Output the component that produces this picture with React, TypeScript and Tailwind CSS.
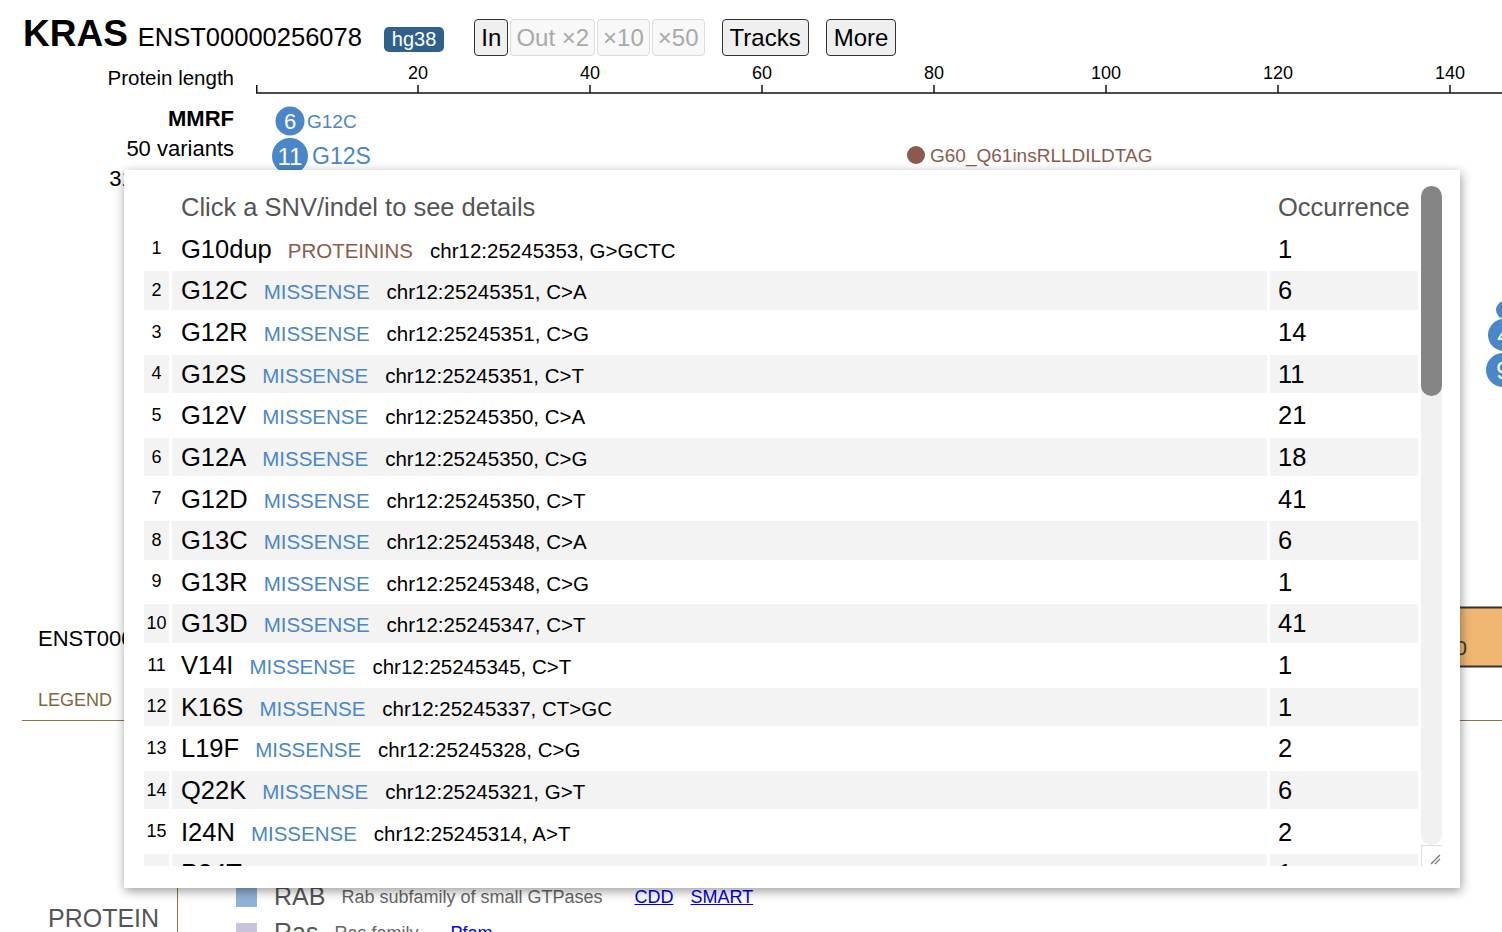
import React from 'react';

const rows: [string, string, string, string][] = [
  ['G10dup', 'PROTEININS', 'chr12:25245353, G>GCTC', '1'],
  ['G12C', 'MISSENSE', 'chr12:25245351, C>A', '6'],
  ['G12R', 'MISSENSE', 'chr12:25245351, C>G', '14'],
  ['G12S', 'MISSENSE', 'chr12:25245351, C>T', '11'],
  ['G12V', 'MISSENSE', 'chr12:25245350, C>A', '21'],
  ['G12A', 'MISSENSE', 'chr12:25245350, C>G', '18'],
  ['G12D', 'MISSENSE', 'chr12:25245350, C>T', '41'],
  ['G13C', 'MISSENSE', 'chr12:25245348, C>A', '6'],
  ['G13R', 'MISSENSE', 'chr12:25245348, C>G', '1'],
  ['G13D', 'MISSENSE', 'chr12:25245347, C>T', '41'],
  ['V14I', 'MISSENSE', 'chr12:25245345, C>T', '1'],
  ['K16S', 'MISSENSE', 'chr12:25245337, CT>GC', '1'],
  ['L19F', 'MISSENSE', 'chr12:25245328, C>G', '2'],
  ['Q22K', 'MISSENSE', 'chr12:25245321, G>T', '6'],
  ['I24N', 'MISSENSE', 'chr12:25245314, A>T', '2'],
  ['P34T', 'MISSENSE', 'chr12:25245305, C>T', '1'],
];

const ticks = [20, 40, 60, 80, 100, 120, 140];

function ZoomButton({ label, disabled, className = '' }: { label: string; disabled?: boolean; className?: string }) {
  return (
    <button
      disabled={disabled}
      className={
        'h-[37px] text-[24px] leading-none rounded-[4px] border ' +
        (disabled
          ? 'bg-[#f8f8f8] border-[#dcdcdc] text-[#a9a9a9]'
          : 'bg-[#efefef] border-[#333] text-black') +
        ' ' +
        className
      }
    >
      {label}
    </button>
  );
}

function VariantTable() {
  return (
    <div className="absolute left-[124px] top-[170px] w-[1336px] h-[718px] bg-white shadow-[1px_3px_10px_rgba(0,0,0,0.4)] pt-[15px] pl-[17px] pr-[18px] pb-[22px]">
      <div className="flex h-full">
        <div className="flex-1 overflow-hidden">
          <div className="grid grid-cols-[25px_1fr_148px] auto-rows-[38.64px] gap-[3px] p-[3px]">
            <div />
            <div className="flex items-center pl-[9px] text-[25.5px] text-[#555]">Click a SNV/indel to see details</div>
            <div className="flex items-center pl-[8px] text-[25.5px] text-[#555]">Occurrence</div>
            {rows.map(([name, cls, coord, count], i) => {
              const bg = i % 2 === 1 ? 'bg-[#f3f3f3]' : '';
              return (
                <React.Fragment key={i}>
                  <div className={'flex items-center justify-center text-[18px] text-black ' + bg}>{i + 1}</div>
                  <div className={'flex items-center pl-[9px] ' + bg}>
                    <div className="flex items-baseline">
                      <span className="text-[25.5px] text-black">{name}</span>
                      <span
                        className={
                          'ml-[16px] text-[20.5px] ' + (cls === 'MISSENSE' ? 'text-[#4a86c8]' : 'text-[#8b5a4a]')
                        }
                      >
                        {cls}
                      </span>
                      <span className="ml-[17px] text-[20.5px] text-black">{coord}</span>
                    </div>
                  </div>
                  <div className={'flex items-center pl-[8px] text-[25.5px] text-black ' + bg}>{count}</div>
                </React.Fragment>
              );
            })}
          </div>
        </div>
        <div className="w-[21px] flex flex-col pt-[1px]">
          <div className="flex-1 rounded-full bg-[#f1f1f1]">
            <div className="h-[210px] rounded-full bg-[#858585]" />
          </div>
          <div className="h-[21px] border-t border-l border-[#dddddd] flex items-end justify-end">
            <svg width="14" height="14" viewBox="0 0 14 14">
              <line x1="3" y1="12" x2="12" y2="3" stroke="#777" strokeWidth="1.2" />
              <line x1="7" y1="12" x2="12" y2="7" stroke="#777" strokeWidth="1.2" />
            </svg>
          </div>
        </div>
      </div>
    </div>
  );
}

export default function App() {
  return (
    <div className="relative w-[1502px] h-[932px] overflow-hidden bg-white font-['Liberation_Sans',Arial,sans-serif] text-black">
      {/* header */}
      <div className="flex items-start h-[56px] pl-[23px]">
        <div className="mt-[15px] text-[37px] font-bold leading-none">KRAS</div>
        <div className="mt-[25px] ml-[10px] text-[25.5px] leading-none">ENST00000256078</div>
        <div className="mt-[27px] ml-[22px] h-[25px] px-[8px] rounded-[5px] bg-[#30618c] text-white text-[20px] leading-[25px]">
          hg38
        </div>
        <div className="mt-[19px] ml-[30px] flex gap-[2px]">
          <ZoomButton label="In" className="px-[6px]" />
          <ZoomButton label="Out ×2" disabled className="px-[5px]" />
          <ZoomButton label="×10" disabled className="px-[5px]" />
          <ZoomButton label="×50" disabled className="px-[5px]" />
        </div>
        <ZoomButton label="Tracks" className="mt-[19px] ml-[17px] px-[7px]" />
        <ZoomButton label="More" className="mt-[19px] ml-[17px] px-[7px]" />
      </div>

      {/* tracks */}
      <div className="flex h-[614px]">
        <div className="w-[256px] shrink-0 flex flex-col">
          <div className="h-[44px] flex items-center justify-end pr-[22px] text-[20.5px]">Protein length</div>
          <div className="mt-[3px] h-[30px] flex items-center justify-end pr-[22px] text-[22px] font-bold">MMRF</div>
          <div className="h-[30px] flex items-center justify-end pr-[22px] text-[22px]">50 variants</div>
          <div className="h-[30px] flex items-center justify-end pr-[22px] text-[22px]">316 samples</div>
          <div className="mt-[430px] h-[30px] flex items-center pl-[38px] text-[22px] whitespace-nowrap">
            ENST00000256078
          </div>
        </div>
        <svg width="1246" height="614" className="shrink-0">
          <line x1="0" y1="37" x2="1246" y2="37" stroke="#111" strokeWidth="1.5" />
          <line x1="0.75" y1="29" x2="0.75" y2="37" stroke="#111" strokeWidth="1.5" />
          {ticks.map((t) => {
            const x = 162 + (t - 20) * 8.6;
            return (
              <g key={t}>
                <line x1={x} y1="29" x2={x} y2="37" stroke="#111" strokeWidth="1.5" />
                <text x={x} y="22.5" textAnchor="middle" fontSize="18" fill="#000">
                  {t}
                </text>
              </g>
            );
          })}
          <circle cx="34" cy="65" r="14.5" fill="#4a86c8" />
          <text x="34" y="73" textAnchor="middle" fontSize="22" fill="#fff">6</text>
          <text x="51" y="71.5" fontSize="19" fill="#4a86c8">G12C</text>
          <circle cx="34" cy="100" r="18" fill="#4a86c8" />
          <text x="34" y="108.5" textAnchor="middle" fontSize="24" fill="#fff">11</text>
          <text x="56" y="108" fontSize="23" fill="#4a86c8">G12S</text>
          <circle cx="660" cy="99" r="9" fill="#8b5a4c" />
          <text x="674" y="105.5" fontSize="19" fill="#8b5a4c">G60_Q61insRLLDILDTAG</text>

          <circle cx="1249" cy="254" r="9" fill="#4a86c8" />
          <circle cx="1248" cy="279" r="16" fill="#4a86c8" />
          <text x="1248" y="287.5" textAnchor="middle" fontSize="24" fill="#fff">4</text>
          <circle cx="1247" cy="314" r="17" fill="#4a86c8" />
          <text x="1247" y="322.5" textAnchor="middle" fontSize="24" fill="#fff">9</text>

          <rect x="0" y="551.5" width="1300" height="59" fill="#f0b772" stroke="#333" strokeWidth="2" />
          <text x="1211" y="599" textAnchor="end" fontSize="20" fill="#333">1-170</text>
        </svg>
      </div>

      {/* legend */}
      <div className="ml-[22px] h-[51px] flex items-end pb-[10px] pl-[16px] border-b border-[#8a7440]">
        <span className="text-[18px] leading-[20px] text-[#7d6a3e]">LEGEND</span>
      </div>
      <div className="flex">
        <div className="ml-[22px] w-[156px] h-[211px] border-r border-[#8a7440] pl-[26px]">
          <div className="mt-[182px] text-[25px] leading-[30px] text-[#555]">PROTEIN</div>
        </div>
        <div className="pl-[58px] pt-[158px] flex flex-col">
          <div className="h-[36px] flex items-center">
            <div className="w-[21px] h-[20px] bg-[#8fb3d6]" />
            <span className="ml-[17px] text-[25px] text-[#555]">RAB</span>
            <span className="ml-[16px] text-[18px] text-[#666]">Rab subfamily of small GTPases</span>
            <a className="ml-[32px] text-[18px] text-[#0000ee] underline">CDD</a>
            <a className="ml-[17px] text-[18px] text-[#0000ee] underline">SMART</a>
          </div>
          <div className="h-[36px] flex items-center">
            <div className="w-[21px] h-[20px] bg-[#c9c1dd]" />
            <span className="ml-[17px] text-[25px] text-[#555]">Ras</span>
            <span className="ml-[16px] text-[18px] text-[#666]">Ras family</span>
            <a className="ml-[32px] text-[18px] text-[#0000ee] underline">Pfam</a>
          </div>
        </div>
      </div>

      <VariantTable />
    </div>
  );
}
